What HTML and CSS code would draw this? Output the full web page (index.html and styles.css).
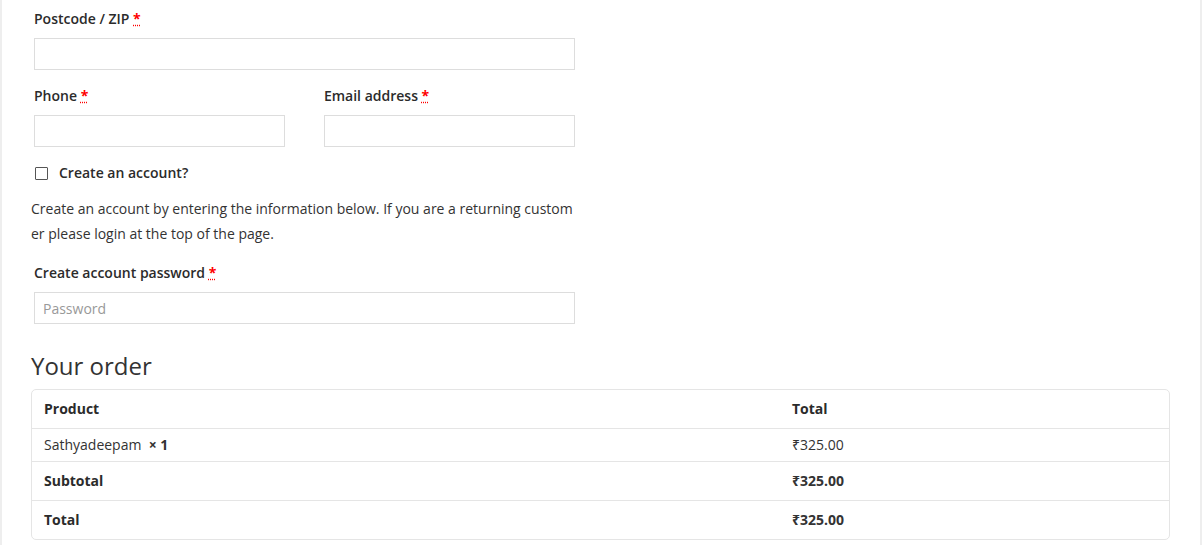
FILE: index.html
```html
<!DOCTYPE html>
<html lang="en">
<head>
<meta charset="utf-8">
<title>Checkout</title>
<link rel="stylesheet" href="styles.css">
</head>
<body>
<div class="page">
  <div class="content">
    <div class="billing">
      <p class="form-row form-row-wide">
        <label class="field-label">Postcode / ZIP <abbr class="required" title="required">*</abbr></label>
        <input class="input-text" type="text">
      </p>
      <div class="row-pair">
        <p class="form-row form-row-half">
          <label class="field-label">Phone <abbr class="required" title="required">*</abbr></label>
          <input class="input-text" type="tel">
        </p>
        <p class="form-row form-row-half">
          <label class="field-label">Email address <abbr class="required" title="required">*</abbr></label>
          <input class="input-text" type="email">
        </p>
      </div>
      <p class="form-row create-account">
        <label class="checkbox-label"><span class="checkbox"></span><span>Create an account?</span></label>
      </p>
      <p class="account-note">Create an account by entering the information below. If you are a returning customer please login at the top of the page.</p>
      <p class="form-row form-row-wide">
        <label class="field-label">Create account password <abbr class="required" title="required">*</abbr></label>
        <input class="input-text" type="password" placeholder="Password">
      </p>
    </div>

    <h3 class="order-heading">Your order</h3>
    <table class="shop-table">
      <thead>
        <tr><th class="col-name">Product</th><th class="col-total">Total</th></tr>
      </thead>
      <tbody>
        <tr class="cart-item"><td>Sathyadeepam&nbsp; <strong class="qty">× 1</strong></td><td>₹325.00</td></tr>
      </tbody>
      <tfoot>
        <tr class="foot-row"><th>Subtotal</th><td><strong>₹325.00</strong></td></tr>
        <tr class="foot-row"><th>Total</th><td><strong>₹325.00</strong></td></tr>
      </tfoot>
    </table>
  </div>
</div>
</body>
</html>
```

FILE: styles.css
```css
html, body {
  margin: 0;
  padding: 0;
  background: #fff;
}
body {
  font-family: "Open Sans", "Noto Sans", sans-serif;
  font-size: 14px;
  line-height: 1.5;
  color: #333;
}
.page {
  width: 1202px;
  height: 545px;
  box-sizing: border-box;
  border-left: 2px solid #eeeeee;
  border-right: 2px solid #eeeeee;
  overflow: hidden;
}
.content {
  padding: 2px 30px 0 29px;
}
.billing {
  width: 547px;
}
.form-row {
  margin: 0 0 6px;
  padding: 3px;
}
.field-label {
  display: block;
  font-weight: 600;
  line-height: 28px;
  margin-bottom: 5px;
  color: #2b2b2b;
}
.required {
  color: #ff0000;
  font-weight: 700;
  text-decoration: underline dotted #ff0000;
  border: 0;
}
.input-text {
  display: block;
  box-sizing: border-box;
  width: 100%;
  height: 32px;
  margin: 0;
  padding: 6px 8px;
  border: 1px solid #dddddd;
  background: #fff;
  font-family: "Open Sans", sans-serif;
  font-size: 14px;
  color: #333;
  outline: none;
}
.input-text::placeholder {
  color: #999;
}
.row-pair {
  display: flex;
  justify-content: space-between;
}
.form-row-half {
  width: 47%;
  box-sizing: border-box;
}
.checkbox-label {
  display: flex;
  align-items: center;
  line-height: 28px;
  font-weight: 600;
  color: #2b2b2b;
}
.checkbox {
  display: inline-block;
  width: 11px;
  height: 11px;
  border: 1px solid #555;
  border-radius: 1px;
  margin: 0 11px 0 1px;
  box-sizing: content-box;
}
.account-note {
  margin: 0 0 10px;
  line-height: 25px;
  word-break: break-all;
}
.order-heading {
  margin: 25px 0 8px;
  font-size: 24px;
  font-weight: 400;
  line-height: 1.2;
  color: #333;
}
.shop-table {
  width: 1139px;
  border: 1px solid #e5e5e5;
  border-radius: 5px;
  border-collapse: separate;
  border-spacing: 0;
  text-align: left;
}
.shop-table th,
.shop-table td {
  padding: 9px 12px;
  line-height: 20px;
  vertical-align: middle;
  font-size: 14px;
}
.shop-table th {
  font-weight: 700;
  color: #2b2b2b;
}
.shop-table .col-name {
  width: 724px;
}
.shop-table tbody td,
.shop-table tfoot th,
.shop-table tfoot td {
  border-top: 1px solid #e5e5e5;
}
.shop-table tbody td {
  padding: 6px 12px;
}
.qty {
  font-weight: 700;
}
```
